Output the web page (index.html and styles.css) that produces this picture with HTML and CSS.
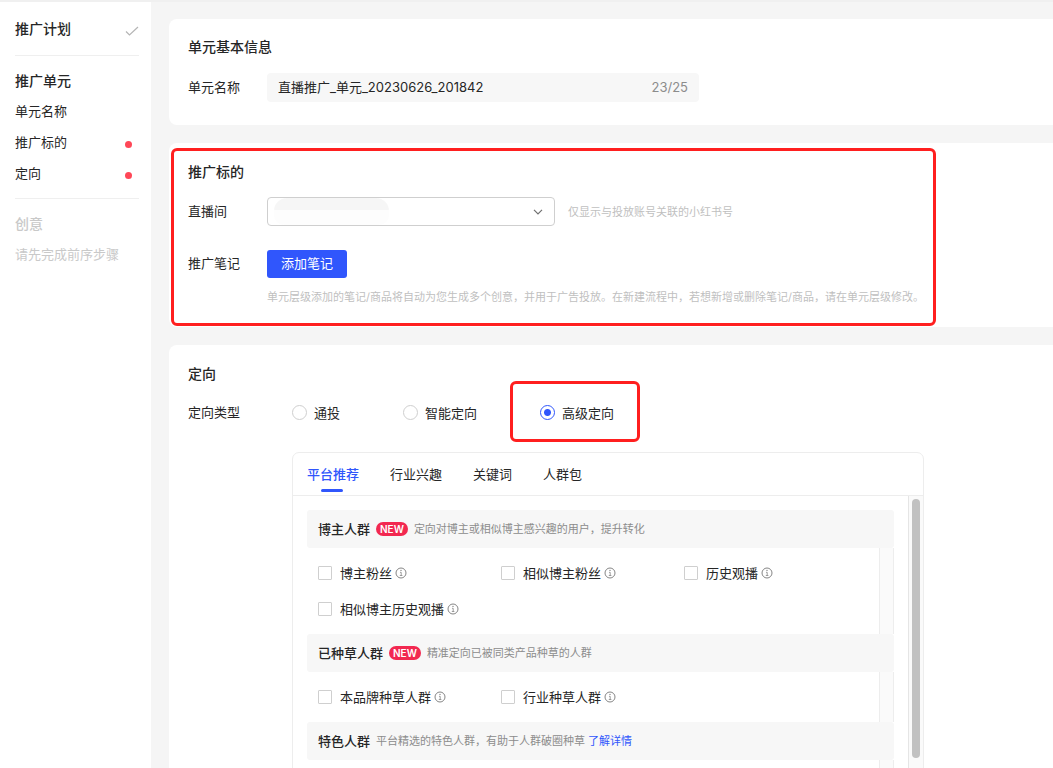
FILE: index.html
```html
<!DOCTYPE html>
<html lang="zh-CN">
<head>
<meta charset="utf-8">
<meta name="viewport" content="width=device-width, initial-scale=1">
<title>推广单元</title>
<link rel="stylesheet" href="styles.css">
</head>
<body>
<svg class="sprite" aria-hidden="true">
  <symbol id="info" viewBox="0 0 12 12">
    <circle cx="6" cy="6" r="5" fill="none" stroke="currentColor"/>
    <path d="M5 5.3h1.2v3.2M4.8 8.5h2.6" fill="none" stroke="currentColor" stroke-width=".8"/>
    <circle cx="6" cy="3.4" r=".7" fill="currentColor"/>
  </symbol>
</svg>
<div class="app">
  <nav class="sidebar">
    <section class="step">
      <h2 class="step-title">推广计划
        <svg class="check" viewBox="0 0 14 12" aria-hidden="true"><path d="M1 6.5 4.5 10 13 2" fill="none" stroke="currentColor" stroke-width="1.2"/></svg>
      </h2>
    </section>
    <section class="step">
      <h2 class="step-title">推广单元</h2>
      <div class="step-links">
        <a class="step-link" href="#name">单元名称</a>
        <a class="step-link" href="#target">推广标的<i class="dot"></i></a>
        <a class="step-link" href="#audience">定向<i class="dot"></i></a>
      </div>
    </section>
    <section class="step step-disabled">
      <h2 class="step-title">创意</h2>
      <div class="step-links">
        <p class="step-link">请先完成前序步骤</p>
      </div>
    </section>
  </nav>

  <main class="main">
    <section class="card card-basic" id="name">
      <h2 class="card-title">单元基本信息</h2>
      <div class="row">
        <label class="label" for="unit-name">单元名称</label>
        <div class="text-field">
          <input class="text-input" id="unit-name" type="text" value="直播推广_单元_20230626_201842">
          <span class="count">23/25</span>
        </div>
      </div>
    </section>

    <section class="card card-target" id="target">
      <div class="highlight">
        <h2 class="card-title">推广标的</h2>
        <div class="row">
          <label class="label" for="room">直播间</label>
          <div class="select-field">
            <select class="select" id="room"><option></option></select>
            <span class="mask"></span>
            <svg class="chevron" viewBox="0 0 10 6" aria-hidden="true"><path d="M1 .8 5 4.9 9 .8" fill="none" stroke="currentColor" stroke-width="1.2"/></svg>
          </div>
          <span class="hint hint-side">仅显示与投放账号关联的小红书号</span>
        </div>
        <div class="row row-note">
          <span class="label">推广笔记</span>
          <button class="primary" type="button">添加笔记</button>
        </div>
        <p class="hint hint-below">单元层级添加的笔记/商品将自动为您生成多个创意，并用于广告投放。在新建流程中，若想新增或删除笔记/商品，请在单元层级修改。</p>
      </div>
    </section>

    <section class="card card-audience" id="audience">
      <h2 class="card-title">定向</h2>
      <div class="row">
        <span class="label">定向类型</span>
        <div class="radios">
          <label class="option"><input class="radio" type="radio" name="type">通投</label>
          <label class="option"><input class="radio" type="radio" name="type">智能定向</label>
          <label class="option option-marked"><input class="radio" type="radio" name="type" checked>高级定向</label>
        </div>
      </div>
      <div class="panel">
        <div class="tabs" role="tablist">
          <button class="tab tab-active" type="button" role="tab" aria-selected="true">平台推荐</button>
          <button class="tab" type="button" role="tab">行业兴趣</button>
          <button class="tab" type="button" role="tab">关键词</button>
          <button class="tab" type="button" role="tab">人群包</button>
        </div>
        <div class="panel-body">
          <div class="groups">
            <div class="group-head"><h3 class="group-title">博主人群</h3><span class="badge">NEW</span><span class="desc">定向对博主或相似博主感兴趣的用户，提升转化</span></div>
            <div class="group-items">
              <label class="option"><input class="box" type="checkbox">博主粉丝<svg class="info"><use href="#info"/></svg></label>
              <label class="option"><input class="box" type="checkbox">相似博主粉丝<svg class="info"><use href="#info"/></svg></label>
              <label class="option"><input class="box" type="checkbox">历史观播<svg class="info"><use href="#info"/></svg></label>
              <label class="option"><input class="box" type="checkbox">相似博主历史观播<svg class="info"><use href="#info"/></svg></label>
            </div>
            <div class="group-head"><h3 class="group-title">已种草人群</h3><span class="badge">NEW</span><span class="desc">精准定向已被同类产品种草的人群</span></div>
            <div class="group-items">
              <label class="option"><input class="box" type="checkbox">本品牌种草人群<svg class="info"><use href="#info"/></svg></label>
              <label class="option"><input class="box" type="checkbox">行业种草人群<svg class="info"><use href="#info"/></svg></label>
            </div>
            <div class="group-head"><h3 class="group-title">特色人群</h3><span class="desc">平台精选的特色人群，有助于人群破圈种草<a class="more" href="#more">了解详情</a></span></div>
            <div class="group-items"></div>
          </div>
          <div class="track"><div class="thumb"></div></div>
        </div>
      </div>
    </section>
  </main>
</div>
</body>
</html>
```

FILE: styles.css
```css
* {
  box-sizing: border-box;
}

body {
  margin: 0;
  background: #f5f5f5;
  color: #262626;
  font: 13px/20px Inter, "Noto Sans CJK SC", sans-serif;
}

h2, h3, p {
  margin: 0;
}

input, select, button {
  margin: 0;
  color: inherit;
  font: inherit;
}

a {
  color: inherit;
  text-decoration: none;
}

.sprite {
  position: absolute;
  width: 0;
  height: 0;
}

.app {
  display: flex;
  height: 100vh;
  overflow: hidden;
  border-top: 2px solid #f0f0f0;
}

/* Step navigation */
.sidebar {
  flex: none;
  width: 151px;
  padding: 0 12px 0 15px;
  background: #fff;
}

.step {
  padding: 15px 0 9px;
}

.step:first-child {
  padding: 17px 0 16px;
}

.step + .step {
  border-top: 1px solid #efefef;
}

.step-title {
  display: flex;
  align-items: center;
  justify-content: space-between;
  font-size: 14px;
  font-weight: 500;
  line-height: 20px;
}

.check {
  width: 14px;
  height: 12px;
  margin-top: 3px;
  color: #b5b5b5;
}

.step-links {
  padding-top: 5px;
}

.step-link {
  display: flex;
  align-items: center;
  justify-content: space-between;
  height: 31px;
  padding: 0 7px 2px 0;
}

.dot {
  width: 7px;
  height: 7px;
  margin-top: 5px;
  border-radius: 50%;
  background: #ff4757;
}

.step-disabled {
  color: #c9c9c9;
}

.step-disabled .step-link {
  padding-right: 0;
}

/* Form cards */
.main {
  display: flex;
  flex: 1;
  flex-direction: column;
  gap: 18px;
  min-width: 0;
  padding: 17px 0 0 18px;
}

.card {
  flex: none;
  border-radius: 8px 0 0 8px;
  background: #fff;
}

.card-basic {
  padding: 18px 19px 23px;
}

.card-target {
  padding: 5px 0 1px 2px;
}

.card-audience {
  padding: 19px 19px 0;
}

.card-title {
  font-size: 14px;
  font-weight: 500;
  line-height: 20px;
}

.row {
  display: flex;
  align-items: center;
  min-height: 29px;
  margin-top: 16px;
}

.label {
  flex: none;
  width: 79px;
  padding-bottom: 2px;
}

.text-field {
  display: flex;
  align-items: center;
  width: 432px;
  height: 29px;
  padding: 0 11px 2px;
  border-radius: 4px;
  background: #f7f7f7;
}

.text-input {
  flex: 1;
  min-width: 0;
  padding: 0;
  border: 0;
  outline: 0;
  background: none;
}

.count {
  color: #8c8c8c;
}

.highlight {
  max-width: 765px;
  padding: 11px 14px 16px;
  border: 3px solid #ff1f1f;
  border-radius: 6px;
}

.highlight .row {
  margin-top: 15px;
}

.highlight .row-note {
  margin-top: 23px;
}

.select-field {
  position: relative;
  width: 288px;
}

.select {
  display: block;
  width: 100%;
  height: 29px;
  padding: 0 11px;
  border: 1px solid #cfcfcf;
  border-radius: 4px;
  appearance: none;
  background: #fff;
}

.mask {
  position: absolute;
  top: 1px;
  left: 7px;
  width: 115px;
  height: 27px;
  border-radius: 13px 13px 10px 10px;
  background: linear-gradient(#f6f6f6 12px, #fdfdfd 12px);
}

.chevron {
  position: absolute;
  top: 12px;
  right: 12px;
  width: 10px;
  height: 6px;
  color: #707070;
}

.hint {
  color: #bfbfbf;
  font-size: 11px;
}

.hint-side {
  margin-left: 13px;
}

.hint-below {
  margin: 9px 0 0 79px;
  white-space: nowrap;
}

.primary {
  height: 28px;
  padding: 0 14px 1px;
  border: 0;
  border-radius: 3px;
  background: #3056fc;
  color: #fff;
}

/* Audience options */
.card-audience .row {
  margin-top: 14px;
}

.radios {
  display: flex;
  gap: 63px;
  margin-left: 25px;
}

.option {
  display: flex;
  align-items: center;
}

.option-marked {
  position: relative;
}

.option-marked::after {
  position: absolute;
  inset: -22px -26px -19px -30px;
  border: 3px solid #ff1f1f;
  border-radius: 6px;
  content: "";
}

.radio, .box {
  flex: none;
  width: 15px;
  height: 15px;
  border: 1px solid #cfcfcf;
  appearance: none;
  background: #fff;
}

.radio {
  margin-right: 7px;
  border-radius: 50%;
}

.radio:checked {
  border-color: #3056fc;
  background: radial-gradient(circle, #3056fc 3px, #fff 4px);
}

.box {
  width: 14px;
  height: 14px;
  margin-right: 8px;
  border-radius: 1px;
}

.info {
  width: 12px;
  height: 12px;
  margin-left: 3px;
  color: #858585;
}

.panel {
  max-width: 632px;
  margin: 25px 0 0 104px;
  border: 1px solid #ededed;
  border-radius: 7px 7px 0 0;
}

.tabs {
  display: flex;
  gap: 31px;
  height: 43px;
  padding: 0 14px;
  border-bottom: 1px solid #ededed;
}

.tab {
  position: relative;
  padding: 0;
  border: 0;
  background: none;
}

.tab-active {
  color: #3056fc;
  font-weight: 500;
}

.tab-active::after {
  position: absolute;
  bottom: 3px;
  left: 50%;
  width: 22px;
  height: 3px;
  margin-left: -12px;
  border-radius: 2px;
  background: #3056fc;
  content: "";
}

.panel-body {
  display: flex;
}

.groups {
  flex: 1;
  min-width: 0;
  padding: 14px 14px 0;
}

.group-head {
  display: flex;
  align-items: center;
  gap: 6px;
  height: 38px;
  padding: 0 11px;
  border-radius: 3px;
  background: #f7f7f7;
}

.group-title {
  font-size: 13px;
  font-weight: 500;
}

.badge {
  padding: 0 4px;
  border-radius: 7px;
  background: #f22850;
  color: #fff;
  font-size: 10px;
  font-weight: 600;
  line-height: 14px;
}

.desc {
  color: #8c8c8c;
  font-size: 11px;
}

.more {
  margin-left: 3px;
  color: #3056fc;
}

.group-items {
  display: grid;
  grid-template-columns: repeat(3, 183px);
  grid-auto-rows: 36px;
  min-height: 50px;
  padding: 7px 11px;
  border-right: 1px solid #ededed;
  background: linear-gradient(#ededed, #ededed) right 13px top / 1px 100% no-repeat, linear-gradient(#fafafa, #fafafa) right / 13px 100% no-repeat;
}

.track {
  flex: none;
  width: 15px;
  padding: 3px;
  border-left: 1px solid #e5e5e5;
  background: #fafafa;
}

.thumb {
  width: 8px;
  height: 259px;
  border-radius: 4px;
  background: #c1c1c1;
}
```
